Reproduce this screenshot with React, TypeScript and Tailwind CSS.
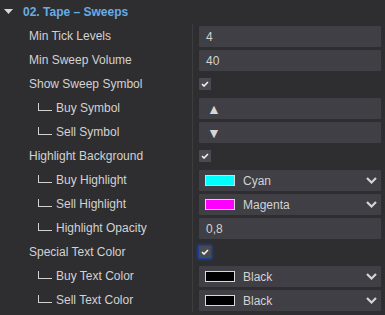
type Row =
  | { label: string; sub?: boolean; kind: "text"; value: string }
  | { label: string; sub?: boolean; kind: "check"; focus?: boolean }
  | { label: string; sub?: boolean; kind: "color"; color: string; value: string };

const rows: Row[] = [
  { label: "Min Tick Levels", kind: "text", value: "4" },
  { label: "Min Sweep Volume", kind: "text", value: "40" },
  { label: "Show Sweep Symbol", kind: "check" },
  { label: "Buy Symbol", sub: true, kind: "text", value: "▲" },
  { label: "Sell Symbol", sub: true, kind: "text", value: "▼" },
  { label: "Highlight Background", kind: "check" },
  { label: "Buy Highlight", sub: true, kind: "color", color: "#00ffff", value: "Cyan" },
  { label: "Sell Highlight", sub: true, kind: "color", color: "#ff00ff", value: "Magenta" },
  { label: "Highlight Opacity", sub: true, kind: "text", value: "0,8" },
  { label: "Special Text Color", kind: "check", focus: true },
  { label: "Buy Text Color", sub: true, kind: "color", color: "#000000", value: "Black" },
  { label: "Sell Text Color", sub: true, kind: "color", color: "#000000", value: "Black" },
];

function Chevron() {
  return (
    <svg width="11" height="7" viewBox="0 0 11 7" className="shrink-0">
      <polyline points="1,1 5.5,5.5 10,1" fill="none" stroke="#d4d4d4" strokeWidth="2.2" />
    </svg>
  );
}

function Check({ focus }: { focus?: boolean }) {
  return (
    <div
      className={`w-[12px] h-[12px] bg-[#4a4a52] flex items-center justify-center ${
        focus ? "shadow-[0_0_0_1px_#1d3f8f,0_0_3px_1px_#1d4bb0]" : ""
      }`}
    >
      <svg width="8" height="6" viewBox="0 0 8 6">
        <polyline points="1,3 3,5 7,1" fill="none" stroke="#f2f2f2" strokeWidth="1.6" />
      </svg>
    </div>
  );
}

export default function App() {
  return (
    <div
      className="w-[385px] h-[315px] bg-[#2e2e31] text-[12px] text-[#d2d2d2] overflow-hidden"
      style={{ fontFamily: '"Liberation Sans", Arial, sans-serif' }}
    >
      {/* Section header */}
      <div className="h-[24px] flex items-center">
        <svg width="9" height="6" viewBox="0 0 9 6" className="ml-[4px] mr-[10px]">
          <polygon points="0,0 9,0 4.5,5" fill="#d8d8d8" />
        </svg>
        <span className="font-bold text-[#69ace3]">02. Tape – Sweeps</span>
      </div>

      {rows.map((r, i) => (
        <div key={i} className="h-[24px] flex">
          <div className="w-[192px] flex items-center">
            {r.sub ? (
              <span className="pl-[38px] flex items-center">
                <span className="w-[14px] h-[8px] mb-[3px] border-l border-b border-[#d2d2d2] mr-[4px] block" />
                {r.label}
              </span>
            ) : (
              <span className="pl-[29px]">{r.label}</span>
            )}
          </div>
          <div className="flex-1 border-l border-[#3d3d40] pl-[6px] pr-[4px] flex items-center">
            {r.kind === "check" && <Check focus={r.focus} />}
            {r.kind === "text" && (
              <div className="w-full h-[21px] mt-[1px] bg-[#3f3f45] flex items-center px-[7px]">
                <span
                  className={
                    r.value === "▲" || r.value === "▼"
                      ? "text-[14px] leading-none text-[#d6d6d6] pl-[1px]"
                      : ""
                  }
                >
                  {r.value}
                </span>
              </div>
            )}
            {r.kind === "color" && (
              <div className="w-full h-[21px] mt-[1px] bg-[#3f3f45] flex items-center pl-[6px] pr-[4px]">
                <span
                  className="w-[30px] h-[11px] border border-[#d8d8d8] mr-[8px] block"
                  style={{ backgroundColor: r.color }}
                />
                <span className="flex-1">{r.value}</span>
                <Chevron />
              </div>
            )}
          </div>
        </div>
      ))}
    </div>
  );
}
